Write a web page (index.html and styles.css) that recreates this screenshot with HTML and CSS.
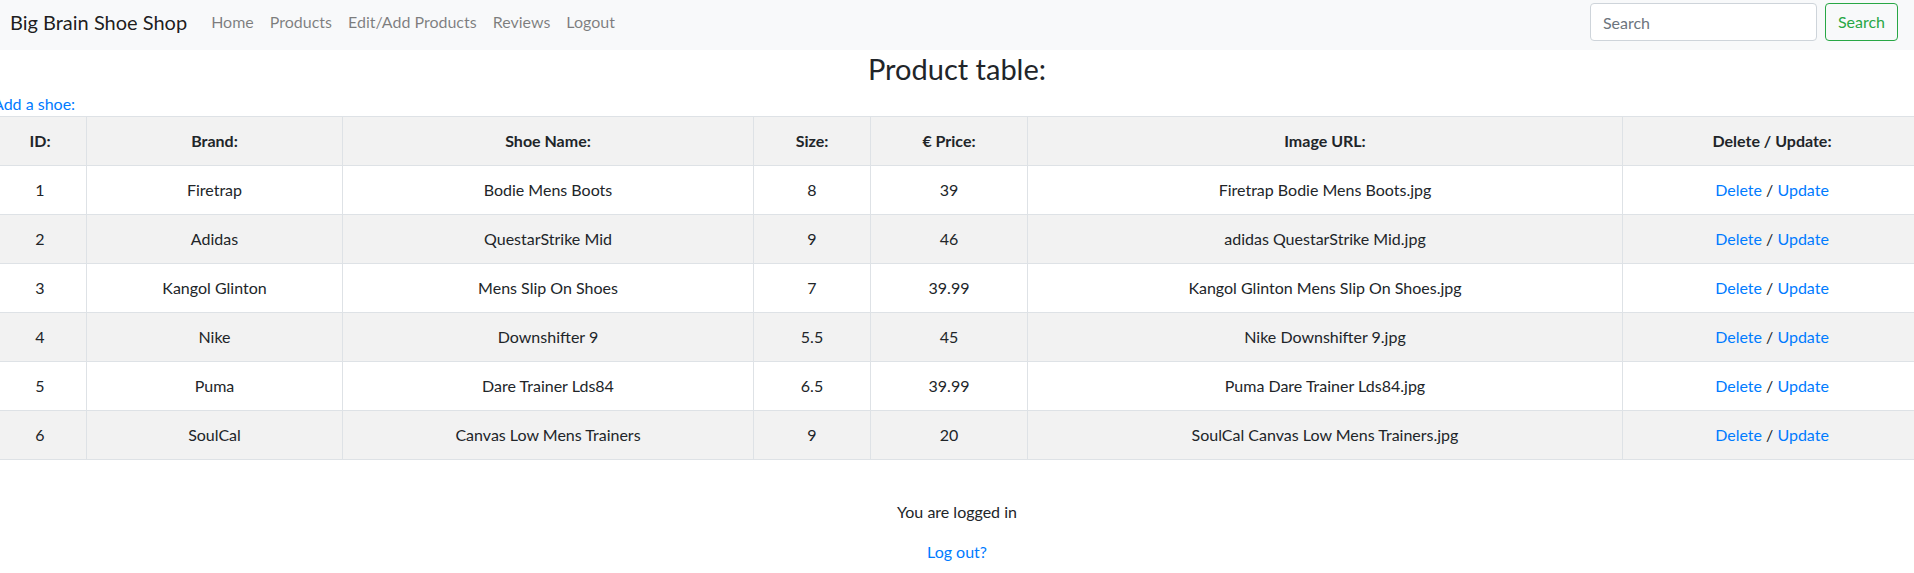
FILE: index.html
```html
<!DOCTYPE html>
<html lang="en">
<head>
<meta charset="utf-8">
<title>Big Brain Shoe Shop</title>
<link rel="stylesheet" href="styles.css">
</head>
<body>
<nav class="navbar">
  <a class="brand" href="#">Big Brain Shoe Shop</a>
  <ul class="nav">
    <li><a href="#">Home</a></li>
    <li><a href="#">Products</a></li>
    <li><a href="#">Edit/Add Products</a></li>
    <li><a href="#">Reviews</a></li>
    <li><a href="#">Logout</a></li>
  </ul>
  <form class="search">
    <input class="search-input" type="search" placeholder="Search">
    <button class="search-btn" type="button">Search</button>
  </form>
</nav>
<main class="content">
  <h2 class="title">Product table:</h2>
  <a class="add-link" href="#">Add a shoe:</a>
  <table class="products">
    <colgroup>
      <col class="c-id"><col class="c-brand"><col class="c-name"><col class="c-size"><col class="c-price"><col class="c-url"><col class="c-act">
    </colgroup>
    <tbody>
      <tr class="head"><th>ID:</th><th>Brand:</th><th>Shoe Name:</th><th>Size:</th><th>€ Price:</th><th>Image URL:</th><th>Delete / Update:</th></tr>
      <tr><td>1</td><td>Firetrap</td><td>Bodie Mens Boots</td><td>8</td><td>39</td><td>Firetrap Bodie Mens Boots.jpg</td><td><a href="#">Delete</a> / <a href="#">Update</a></td></tr>
      <tr><td>2</td><td>Adidas</td><td>QuestarStrike Mid</td><td>9</td><td>46</td><td>adidas QuestarStrike Mid.jpg</td><td><a href="#">Delete</a> / <a href="#">Update</a></td></tr>
      <tr><td>3</td><td>Kangol Glinton</td><td>Mens Slip On Shoes</td><td>7</td><td>39.99</td><td>Kangol Glinton Mens Slip On Shoes.jpg</td><td><a href="#">Delete</a> / <a href="#">Update</a></td></tr>
      <tr><td>4</td><td>Nike</td><td>Downshifter 9</td><td>5.5</td><td>45</td><td>Nike Downshifter 9.jpg</td><td><a href="#">Delete</a> / <a href="#">Update</a></td></tr>
      <tr><td>5</td><td>Puma</td><td>Dare Trainer Lds84</td><td>6.5</td><td>39.99</td><td>Puma Dare Trainer Lds84.jpg</td><td><a href="#">Delete</a> / <a href="#">Update</a></td></tr>
      <tr><td>6</td><td>SoulCal</td><td>Canvas Low Mens Trainers</td><td>9</td><td>20</td><td>SoulCal Canvas Low Mens Trainers.jpg</td><td><a href="#">Delete</a> / <a href="#">Update</a></td></tr>
    </tbody>
  </table>
  <div class="status">
    <p class="status-text">You are logged in</p>
    <a class="status-link" href="#">Log out?</a>
  </div>
</main>
</body>
</html>
```

FILE: styles.css
```css
* { box-sizing: border-box; }
html, body { margin: 0; padding: 0; }
body {
  font-family: "Segoe UI", Lato, "Liberation Sans", sans-serif;
  font-size: 16px;
  line-height: 1.5;
  color: #212529;
  background: #fff;
  overflow: hidden;
}
a { color: #007bff; text-decoration: none; }

.navbar {
  display: flex;
  align-items: center;
  background: #f8f9fa;
  height: 50px;
  padding: 0 16px 6px 10px;
}
.brand {
  font-size: 20px;
  line-height: 30px;
  color: rgba(0,0,0,.9);
  margin-right: 16px;
}
.nav {
  display: flex;
  list-style: none;
  margin: 0;
  padding: 0;
}
.nav a {
  display: block;
  padding: 8px;
  color: rgba(0,0,0,.5);
}
.search {
  margin-left: auto;
  display: flex;
  align-items: center;
}
.search-input {
  width: 227px;
  height: 38px;
  padding: 6px 12px;
  font: inherit;
  color: #495057;
  border: 1px solid #ced4da;
  border-radius: 4px;
  background: #fff;
  margin-right: 8px;
}
.search-input::placeholder { color: #6c757d; }
.search-btn {
  height: 38px;
  padding: 6px 12px;
  font: inherit;
  color: #28a745;
  background: transparent;
  border: 1px solid #28a745;
  border-radius: 4px;
}

.content { display: flex; flex-direction: column; }
.title {
  margin: 0;
  font-size: 29px;
  font-weight: 400;
  line-height: 38px;
  text-align: center;
}
.add-link {
  margin: 4px 0 0 -7px;
  line-height: 24px;
}
.products {
  margin-left: -7px;
  width: 1928px;
  table-layout: fixed;
  border-collapse: collapse;
  margin-bottom: 40px;
}
.c-id { width: 93px; }
.c-brand { width: 256px; }
.c-name { width: 411px; }
.c-size { width: 117px; }
.c-price { width: 157px; }
.c-url { width: 595px; }
.c-act { width: 299px; }
.products th, .products td {
  border: 1px solid #dee2e6;
  padding: 12px;
  text-align: center;
  vertical-align: top;
  line-height: 24px;
}
.products th { font-weight: 700; }
.products tr:nth-child(odd) { background: #f2f2f2; }

.status {
  display: flex;
  flex-direction: column;
  align-items: center;
}
.status-text { margin: 0 0 16px; }
```
